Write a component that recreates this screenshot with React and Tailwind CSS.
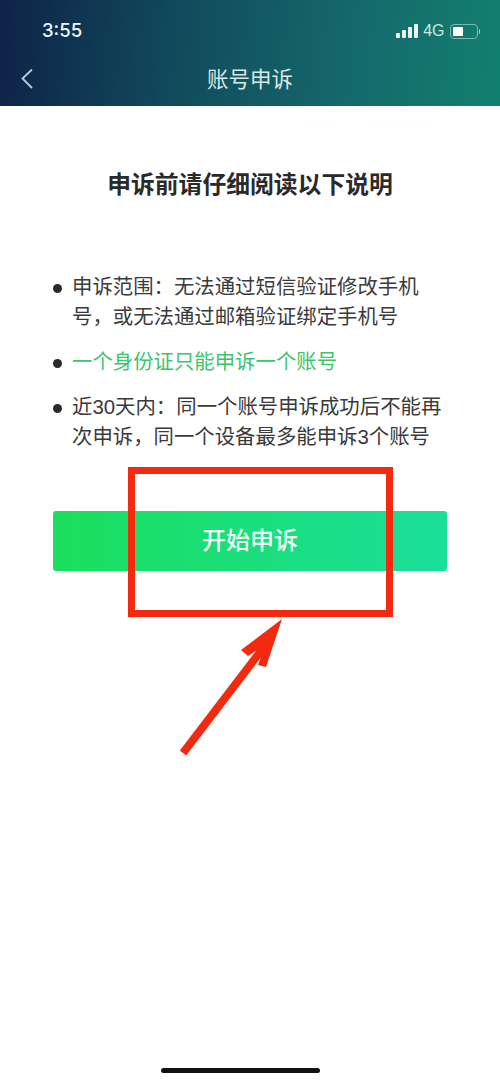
import React from "react";

const cjk = "font-['Liberation_Sans','Noto_Sans_CJK_SC',sans-serif]";
const colon = "\uFF1A";
const comma = "\uFF0C";

function StatusIcons() {
  return (
    <div className="flex items-center">
      <div className="flex items-end gap-[1.5px]">
        <div className="w-[4.5px] h-[5px] bg-[#eef6f5] rounded-[1px]" />
        <div className="w-[4.5px] h-[8px] bg-[#eef6f5] rounded-[1px]" />
        <div className="w-[4.5px] h-[11px] bg-[#eef6f5] rounded-[1px]" />
        <div className="w-[4.5px] h-[14px] bg-[#eef6f5] rounded-[1px]" />
      </div>
      <span className="text-[16px] leading-none text-[#cfe6e3] ml-[5px]">4G</span>
      <div className="flex items-center ml-[5px]">
        <div className="w-[28px] h-[15px] border border-[#7fb8b2] rounded-[4px] p-[2px]">
          <div className="w-[10px] h-full bg-white rounded-[1px]" />
        </div>
        <div className="w-[1.5px] h-[5px] bg-[#9cc9c4] ml-[1px] rounded-r-[1px]" />
      </div>
    </div>
  );
}

function Header() {
  return (
    <div className="h-[106px] bg-[linear-gradient(95deg,#0e2348_0%,#114a5c_35%,#15696b_70%,#12806f_100%)] shrink-0">
      <div className="h-[61px] pt-[19px] pl-[42px] pr-[20px] flex items-start justify-between">
        <span className="text-[18.5px] leading-[22px] font-medium text-[#f2f6f7] font-['Inter',sans-serif]">3:55</span>
        <div className="pt-[4px]">
          <StatusIcons />
        </div>
      </div>
      <div className="relative h-[38px] flex items-center justify-center">
        <svg className="absolute left-[20px] top-[7px]" width="14" height="22" viewBox="0 0 14 22" fill="none">
          <path d="M12 1.5 L2.5 10.5 L12 20" stroke="#b9cfd6" strokeWidth="1.8" />
        </svg>
        <span className="text-[21.5px] leading-[38px] text-[#d9e8e8]">账号申诉</span>
      </div>
    </div>
  );
}

function Bullet({ children, green }) {
  return (
    <li className="flex">
      <div className="w-[19px] shrink-0 pt-[12px]">
        <div className="w-[9px] h-[9px] rounded-full bg-[#2b2b2b]" />
      </div>
      <p className={"text-[20.4px] leading-[30px] whitespace-nowrap " + (green ? "text-[#3cc46e]" : "text-[#3a3a3a]")}>{children}</p>
    </li>
  );
}

export default function App() {
  return (
    <div className={"relative w-[500px] h-[1083px] bg-white overflow-hidden flex flex-col " + cjk}>
      <Header />

      <h1 className="mt-[64px] text-center text-[23.8px] leading-[30px] font-bold text-[#2a2a2a]">
        申诉前请仔细阅读以下说明
      </h1>

      <ul className="mt-[72px] pl-[53px] pr-[30px] flex flex-col gap-[15px]">
        <Bullet>
          申诉范围{colon}无法通过短信验证修改手机
          <br />
          号{comma}或无法通过邮箱验证绑定手机号
        </Bullet>
        <Bullet green>一个身份证只能申诉一个账号</Bullet>
        <Bullet>
          近30天内{colon}同一个账号申诉成功后不能再
          <br />
          次申诉{comma}同一个设备最多能申诉3个账号
        </Bullet>
      </ul>

      <button className="mt-[59px] mx-[53px] h-[60px] shrink-0 rounded-[3px] bg-[linear-gradient(90deg,#1adf5c_0%,#1bde9b_100%)] text-[24px] font-medium text-[#f2fdf6]">
        开始申诉
      </button>

      <div className="mt-auto mb-[10px] ml-[161px] w-[159px] h-[5px] rounded-full bg-[#111111] shrink-0" />

      {/* red annotation drawn over the screenshot */}
      <div className="absolute left-[128px] top-[467px] w-[265px] h-[150px] border-[7px] border-[#f32a10]" />
      <svg className="absolute left-0 top-0 pointer-events-none" width="500" height="1083" fill="none">
        <path d="M183 753 L270 639" stroke="#f32a10" strokeWidth="8" />
        <path d="M282 619 L266 667 L258 665 L265 645 L248 656 L241 650 Z" fill="#f32a10" />
      </svg>
    </div>
  );
}
